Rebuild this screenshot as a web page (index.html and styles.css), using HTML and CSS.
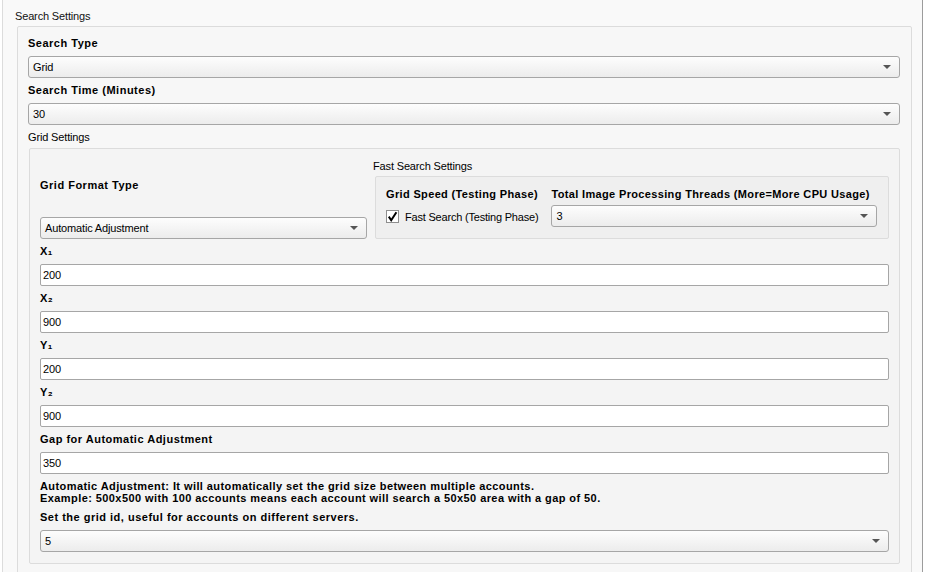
FILE: index.html
```html
<!DOCTYPE html>
<html lang="en">
<head>
    <meta charset="UTF-8">
    <title>Search Settings</title>
    <link rel="stylesheet" href="styles.css">
</head>
<body>
    <div class="page">
        <div class="group-title outer-title">Search Settings</div>
        <div class="group outer">
            <div class="label bold">Search Type</div>
            <div class="combo">Grid<span class="arrow"></span></div>
            <div class="label bold">Search Time (Minutes)</div>
            <div class="combo">30<span class="arrow"></span></div>
            <div class="label grid-title">Grid Settings</div>
            <div class="group grid">
                <div class="top-row">
                    <div class="format-col">
                        <div class="format-label bold">Grid Format Type</div>
                        <div class="combo">Automatic Adjustment<span class="arrow"></span></div>
                    </div>
                    <div class="fast-col">
                        <div class="label fast-title">Fast Search Settings</div>
                        <div class="group fast">
                            <div class="label bold">Grid Speed (Testing Phase)</div>
                            <div class="label bold">Total Image Processing Threads (More=More CPU Usage)</div>
                            <div class="check-row">
                                <span class="checkbox">
                                    <svg width="11" height="11" viewBox="0 0 11 11"><path d="M1.8 5.6 L4.2 9.2 L9.4 1.2" fill="none" stroke="#000" stroke-width="2"/></svg>
                                </span>
                                Fast Search (Testing Phase)
                            </div>
                            <div class="combo">3<span class="arrow"></span></div>
                        </div>
                    </div>
                </div>

                <div class="label bold">X₁</div>
                <div class="input">200</div>
                <div class="label bold">X₂</div>
                <div class="input">900</div>
                <div class="label bold">Y₁</div>
                <div class="input">200</div>
                <div class="label bold">Y₂</div>
                <div class="input">900</div>
                <div class="label bold">Gap for Automatic Adjustment</div>
                <div class="input">350</div>
                <p class="desc bold">Automatic Adjustment: It will automatically set the grid size between multiple accounts.<br>Example: 500x500 with 100 accounts means each account will search a 50x50 area with a gap of 50.</p>
                <div class="label bold">Set the grid id, useful for accounts on different servers.</div>
                <div class="combo last">5<span class="arrow"></span></div>
            </div>
        </div>
    </div>
</body>
</html>
```

FILE: styles.css
```css
*{padding: 0; margin: 0; box-sizing: border-box;}
html,body{height: 100%; overflow: hidden;}
body{background: #fff; font-family: "Liberation Sans", Arial, sans-serif; font-size: 11px; color: #000; letter-spacing: -0.15px;}

.page{width: 921px; height: 572px; margin-left: 2px; background: #f9f9f9; border-left: 1px solid #dcdcdc; border-right: 1px solid #9c9c9c; padding: 0 10px 0 14px;}

.bold{font-weight: bold; letter-spacing: 0.5px;}

.group-title{line-height: 15px;}
.outer-title{padding-top: 9px; margin-left: -2px; margin-bottom: 2px; color: #111;}

.group{border: 1px solid #dcdcdc; border-radius: 2px;}
.outer{background: #f7f7f7; padding: 9px 11px 0 10px; height: 600px;}
.grid{background: #f4f4f4; margin-left: 1px; padding: 10px 10px 11px 10px;}

.label{line-height: 15px; margin-bottom: 5px; white-space: nowrap;}
.grid-title{margin-bottom: 3px;}

.combo{position: relative; height: 22px; line-height: 20px; padding-left: 4px; margin-bottom: 5px; border: 1px solid #a6a6a6; border-radius: 3px; background: linear-gradient(#fdfdfd, #ececec);}
.combo .arrow{position: absolute; right: 8px; top: 8px; border-left: 4px solid transparent; border-right: 4px solid transparent; border-top: 4px solid #555;}
.combo.last{margin-bottom: 0;}

.input{height: 22px; line-height: 20px; padding-left: 2px; margin-bottom: 5px; border: 1px solid #a6a6a6; border-radius: 2px; background: #fff;}

.top-row{display: flex; gap: 6px; margin-bottom: 5px;}
.format-col{width: 327px; flex-shrink: 0; display: flex; flex-direction: column;}
.format-col .format-label{flex: 1; display: flex; align-items: center; margin-bottom: 6px;}
.format-col .combo{margin-bottom: 0;}
.fast-col{flex: 1; min-width: 0;}
.fast-title{margin-bottom: 2px;}
.fast{background: #efefef; margin-left: 2px; padding: 10px 11px 11px 10px; display: grid; grid-template-columns: auto minmax(0, 1fr); column-gap: 13px; align-items: center;}
.fast .label{margin-bottom: 3px;}
.fast .bold{letter-spacing: 0.35px;}
.fast .combo{margin-bottom: 0;}

.check-row{display: flex; align-items: center; gap: 6px; white-space: nowrap; padding-top: 1px; letter-spacing: -0.2px;}
.checkbox{width: 13px; height: 13px; border: 1px solid #8e8e8e; background: #fff; display: flex; align-items: center; justify-content: center;}

.desc{line-height: 12px; margin-top: 6px; margin-bottom: 6px; letter-spacing: 0.42px;}
```
